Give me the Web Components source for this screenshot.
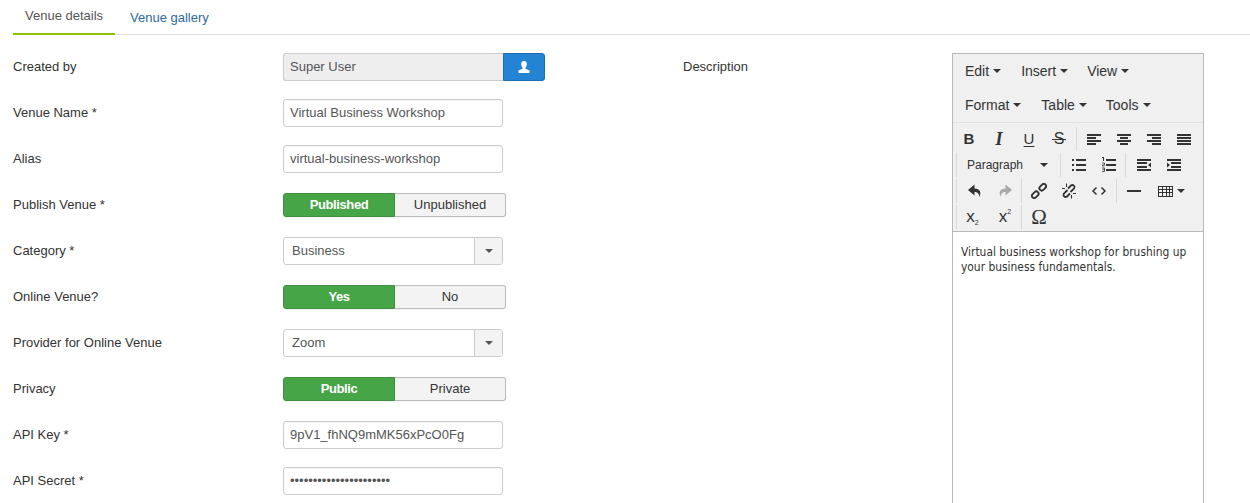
<!DOCTYPE html>
<html lang="en"><head><meta charset="utf-8"><title>Venue</title>
<style>
html,body{margin:0;padding:0;height:503px;overflow:hidden;background:#fff;font-family:"Liberation Sans",Arial,sans-serif;font-size:13px;color:#333}
</style></head><body>
<venue-page>
  <venue-tabs slot="tabs"></venue-tabs>
  <div slot="left">
    <form-field label="Created by"><user-field value="Super User"></user-field></form-field>
    <form-field label="Venue Name *"><text-box value="Virtual Business Workshop"></text-box></form-field>
    <form-field label="Alias"><text-box value="virtual-business-workshop"></text-box></form-field>
    <form-field label="Publish Venue *"><toggle-pair on="Published" off="Unpublished"></toggle-pair></form-field>
    <form-field label="Category *"><select-box value="Business"></select-box></form-field>
    <form-field label="Online Venue?"><toggle-pair on="Yes" off="No"></toggle-pair></form-field>
    <form-field label="Provider for Online Venue"><select-box value="Zoom"></select-box></form-field>
    <form-field label="Privacy"><toggle-pair on="Public" off="Private"></toggle-pair></form-field>
    <form-field label="API Key *"><text-box value="9pV1_fhNQ9mMK56xPcO0Fg"></text-box></form-field>
    <form-field label="API Secret *"><text-box value="••••••••••••••••••••••"></text-box></form-field>
  </div>
  <div slot="right">
    <form-field label="Description" tall lw="269"><rich-editor>Virtual business workshop for brushing up your business fundamentals.</rich-editor></form-field>
  </div>
</venue-page>
<script>
function def(name, html){
  customElements.define(name, class extends HTMLElement{
    connectedCallback(){
      if(this.shadowRoot) return;
      const r=this.attachShadow({mode:"open"});
      r.innerHTML=typeof html==="function"?html(this):html;
    }
  });
}
def("venue-page",`<style>
:host{display:block;height:503px;overflow:hidden}
.top{padding-left:13px}
.cols{display:grid;grid-template-columns:670px 1fr;padding:18px 0 0 13px}
</style><div class="top"><slot name="tabs"></slot></div><div class="cols"><div><slot name="left"></slot></div><div><slot name="right"></slot></div></div>`);
def("venue-tabs",`<style>
:host{display:flex;height:35px;box-sizing:border-box;border-bottom:1px solid #ddd;font-size:13px}
.t{display:block;box-sizing:border-box;height:35px;padding:9px 12px 0;line-height:15px;white-space:nowrap}
.a{width:102px;color:#555;border-bottom:2px solid #8cc200;padding-top:8px}
.b{margin-left:3px;color:#2d6a9f;padding-top:10px}
</style><span class="t a">Venue details</span><span class="t b">Venue gallery</span>`);
def("form-field",el=>`<style>
:host{display:flex;align-items:${el.hasAttribute("tall")?"flex-start":"center"};height:28px;margin-bottom:18px;font-size:13px;color:#333}
.l{width:${el.getAttribute("lw")||270}px;flex:none;line-height:28px}
</style><div class="l">${el.getAttribute("label")}</div><slot></slot>`);
const boxCss=`box-sizing:border-box;height:28px;border:1px solid #ccc;line-height:26px;color:#555;font-size:13px`;
def("text-box",el=>`<style>
:host{display:block;width:220px;${boxCss};border-radius:3px;padding-left:6px;background:#fff;box-shadow:inset 0 1px 1px rgba(0,0,0,.04)}
</style>${el.getAttribute("value")}`);
def("user-field",el=>`<style>
:host{display:flex;width:262px}
.i{flex:none;width:220px;${boxCss};border-radius:3px 0 0 3px;border-right:0;background:#eee;padding-left:6px}
.b{flex:none;width:42px;height:28px;box-sizing:border-box;background:#2384d3;border:1px solid #1c6fb3;border-radius:0 3px 3px 0;display:flex;align-items:center;justify-content:center}
svg{width:14px;height:14px;display:block}
</style><div class="i">${el.getAttribute("value")}</div><div class="b"><svg viewBox="0 0 14 14"><path fill="#fff" d="M7 1C5.200 1 4.200 2.300 4.200 4c0 1.500.6 3 1.300 3.700v1L1.500 10.500V13h11v-2.500L8.500 8.700v-1C9.200 7 9.800 5.500 9.800 4 9.800 2.300 8.800 1 7 1z"/></svg></div>`);
def("select-box",el=>`<style>
:host{display:flex;width:220px;${boxCss};border-radius:3px;background:#fff;overflow:hidden}
.v{flex:1;padding-left:8px}
.a{flex:none;width:27px;background:#f3f3f3;border-left:1px solid #ccc;display:flex;align-items:center;justify-content:center}
.c{width:0;height:0;border:4px solid transparent;border-top-color:#555;border-bottom:0}
</style><div class="v">${el.getAttribute("value")}</div><div class="a"><span class="c"></span></div>`);
def("toggle-pair",el=>`<style>
:host{display:flex;width:223px;height:24px;box-sizing:border-box;border-radius:3px;font-size:13px;line-height:22px;text-align:center;box-shadow:0 1px 2px rgba(0,0,0,.05)}
.on{box-sizing:border-box;width:112px;background:#46a546;color:#fff;font-weight:bold;letter-spacing:-.4px;border:1px solid #3f8f3f;border-radius:3px 0 0 3px}
.off{box-sizing:border-box;width:111px;background:#f3f3f3;color:#333;border:1px solid #bbb;border-left:0;border-radius:0 3px 3px 0}
</style><div class="on">${el.getAttribute("on")}</div><div class="off">${el.getAttribute("off")}</div>`);
def("tool-btn",el=>`<style>
:host{display:flex;flex:none;width:${el.getAttribute("w")||30}px;height:24px;align-items:center;justify-content:center;color:#333}
::slotted(svg){width:16px;height:16px;display:block}
</style><slot></slot>`);
def("tool-group",el=>`<style>
:host{display:flex;flex:none;height:24px;box-sizing:border-box;border-left:${el.hasAttribute("first")?"0":"1px solid #d9d9d9"};padding-left:${el.getAttribute("pad")||0}px;margin-left:${el.getAttribute("gap")||0}px}
</style><slot></slot>`);
def("menu-item",el=>`<style>
:host{display:flex;align-items:center;font-size:14px;color:#333;margin-right:${el.getAttribute("mr")}px}
.c{width:0;height:0;border:4px solid transparent;border-top-color:#333;border-bottom:0;margin-left:4px}
</style><slot></slot><span class="c"></span>`);
const bars=(rows)=>`<svg viewBox="0 0 16 16" shape-rendering="crispEdges" fill="#333">${rows.map(r=>`<rect x="${r[0]}" y="${r[1]}" width="${r[2]}" height="2"/>`).join("")}</svg>`;
const I={
 left:bars([[1,3,14],[1,6,9],[1,9,14],[1,12,9]]),
 center:bars([[1,3,14],[4,6,8],[1,9,14],[4,12,8]]),
 right:bars([[1,3,14],[6,6,9],[1,9,14],[6,12,9]]),
 just:bars([[1,3,14],[1,6,14],[1,9,14],[1,12,14]]),
 bul:bars([[1,2,2],[5,2,10],[1,7,2],[5,7,10],[1,12,2],[5,12,10]]),
 num:`<svg viewBox="0 0 16 16" fill="#333"><g shape-rendering="crispEdges"><rect x="5" y="2" width="10" height="2"/><rect x="5" y="7" width="10" height="2"/><rect x="5" y="12" width="10" height="2"/><rect x="2" y="0" width="1" height="4"/><rect x="1" y="0" width="1" height="1"/></g><path d="M1 6h2.500v2H1.500v1h2M1 11h2.500v3.500H1M1.500 12.700h2" fill="none" stroke="#333" stroke-width=".8"/></svg>`,
 out:`<svg viewBox="0 0 16 16" fill="#333"><g shape-rendering="crispEdges"><rect x="1" y="2" width="14" height="2"/><rect x="1" y="5" width="10" height="2"/><rect x="1" y="9" width="10" height="2"/><rect x="1" y="12" width="14" height="2"/></g><path d="M15 5.500v5L12 8z"/></svg>`,
 ind:`<svg viewBox="0 0 16 16" fill="#333"><g shape-rendering="crispEdges"><rect x="1" y="2" width="14" height="2"/><rect x="5" y="5" width="10" height="2"/><rect x="5" y="9" width="10" height="2"/><rect x="1" y="12" width="14" height="2"/></g><path d="M1 5.500v5L4 8z"/></svg>`,
 undo:`<svg viewBox="0 0 16 16"><path fill="#333" d="M7.500 1.500 1 7l6.500 5.500V9c2.500 0 4.500 1 5 5 2-5 .5-8.200-5-8.500z"/></svg>`,
 redo:`<svg viewBox="0 0 16 16"><path fill="#a9a9a9" d="M8.500 1.500 15 7l-6.500 5.500V9c-2.500 0-4.500 1-5 5-2-5-.5-8.200 5-8.500z"/></svg>`,
 link:`<svg viewBox="0 0 16 16" fill="none" stroke="#333" stroke-width="1.900"><rect x="-5.500" y="-2.300" width="7.500" height="4.600" rx="2.300" transform="translate(5.500 10.500) rotate(-45)"/><rect x="-2" y="-2.300" width="7.500" height="4.600" rx="2.300" transform="translate(10.500 5.500) rotate(-45)"/></svg>`,
 unlink:`<svg viewBox="0 0 16 16" fill="none" stroke="#333" stroke-width="1.800"><path d="M6.500 7 2.800 10.700a2.200 2.200 0 0 0 3 3L9 10.500M9.500 9l3.700-3.700a2.200 2.200 0 0 0-3-3L7 5.500"/><path stroke-width="1.100" d="M1 5.500h3M5.500 .5V4M15 10.500h-3M10.500 15.500V12"/></svg>`,
 code:`<svg viewBox="0 0 16 16" fill="none" stroke="#333" stroke-width="1.500"><path d="M5.500 4.500 2 8l3.500 3.500M10.500 4.500 14 8l-3.500 3.500"/></svg>`,
 hr:`<svg viewBox="0 0 16 16" shape-rendering="crispEdges"><rect x="1" y="7" width="14" height="2" fill="#333"/></svg>`,
 table:`<svg viewBox="0 0 16 16" shape-rendering="crispEdges" fill="none" stroke="#333"><rect x=".5" y="3.500" width="14" height="10"/><path d="M.5 6.500h14M.5 9.500h14M4.500 3.500v10M8 3.500v10M11.500 3.500v10"/></svg>`
};
def("rich-editor",`<style>
:host{display:block;width:252px;height:700px;box-sizing:border-box;border:1px solid #b9b9b9;background:#fff;font-size:14px}
.head{background:#f0f0f0;border-bottom:1px solid #b9b9b9}
.mb{height:34px;display:flex;align-items:center;padding-left:12px}
.m2{border-bottom:1px solid #e2e2e2;height:33px;padding-bottom:1px;box-sizing:content-box}
.tb{height:108px;padding-top:4px;box-sizing:border-box}
.r{display:flex;height:24px;margin-bottom:2px;padding-left:1px}
.tx{font-family:"Liberation Sans",Arial,sans-serif;font-size:16px;line-height:20px;color:#333;display:block}
.B{font-weight:bold;font-size:15px}.I{font-family:"Liberation Serif",serif;font-style:italic;font-weight:bold;font-size:18px}
.U{text-decoration:underline;text-underline-offset:2px;font-size:15px}
.S{font-size:16px;padding:0 2px;background:linear-gradient(#333,#333) no-repeat 0 10px/100% 1px}
.lb{display:flex;flex:none;width:102px;height:24px;align-items:center;font-size:12px;color:#333;padding-left:10px;box-sizing:border-box}
.lb span:first-child{flex:1}
.c{width:0;height:0;border:4px solid transparent;border-top-color:#333;border-bottom:0}
.lb .c{margin-right:11px}
.sc{font-size:17px;line-height:24px;color:#333;display:block}
.sc small{font-size:7px;line-height:0}
.sub{padding-right:5px}.sub small{vertical-align:-3px}.sup small{vertical-align:8px}
.om{font-family:"Liberation Serif",serif;font-size:21px;line-height:24px;color:#333}
.content{padding:13px 8px 0;font-family:"DejaVu Sans Condensed","DejaVu Sans",sans-serif;font-stretch:condensed;font-size:11.900px;line-height:15px;color:#333}
</style>
<div class="head">
 <div class="mb"><menu-item mr="20">Edit</menu-item><menu-item mr="19">Insert</menu-item><menu-item mr="0">View</menu-item></div>
 <div class="mb m2"><menu-item mr="20">Format</menu-item><menu-item mr="19">Table</menu-item><menu-item mr="0">Tools</menu-item></div>
 <div class="tb">
  <div class="r">
   <tool-group first><tool-btn><span class="tx B">B</span></tool-btn><tool-btn><span class="tx I">I</span></tool-btn><tool-btn><span class="tx U">U</span></tool-btn><tool-btn><span class="tx S">S</span></tool-btn></tool-group>
   <tool-group gap="2" pad="2"><tool-btn>${I.left}</tool-btn><tool-btn>${I.center}</tool-btn><tool-btn>${I.right}</tool-btn><tool-btn>${I.just}</tool-btn></tool-group>
  </div>
  <div class="r">
   <tool-group gap="2"><div class="lb"><span>Paragraph</span><span class="c"></span></div></tool-group>
   <tool-group gap="1" pad="3"><tool-btn>${I.bul}</tool-btn><tool-btn>${I.num}</tool-btn></tool-group>
   <tool-group gap="1" pad="3"><tool-btn>${I.out}</tool-btn><tool-btn>${I.ind}</tool-btn></tool-group>
  </div>
  <div class="r">
   <tool-group gap="2" pad="3"><tool-btn>${I.undo}</tool-btn><tool-btn>${I.redo}</tool-btn></tool-group>
   <tool-group gap="1" pad="2"><tool-btn>${I.link}</tool-btn><tool-btn>${I.unlink}</tool-btn><tool-btn>${I.code}</tool-btn></tool-group>
   <tool-group gap="2" pad="2"><tool-btn>${I.hr}</tool-btn><tool-btn w="45">${I.table}<span class="c" style="margin-left:3px"></span></tool-btn></tool-group>
  </div>
  <div class="r">
   <tool-group gap="2" pad="3"><tool-btn><span class="sc sub">x<small>2</small></span></tool-btn><tool-btn><span class="sc sup">x<small>2</small></span></tool-btn></tool-group>
   <tool-group gap="1" pad="2"><tool-btn><span class="om">Ω</span></tool-btn></tool-group>
  </div>
 </div>
</div>
<div class="content"><slot></slot></div>`);
</script>
</body></html>
